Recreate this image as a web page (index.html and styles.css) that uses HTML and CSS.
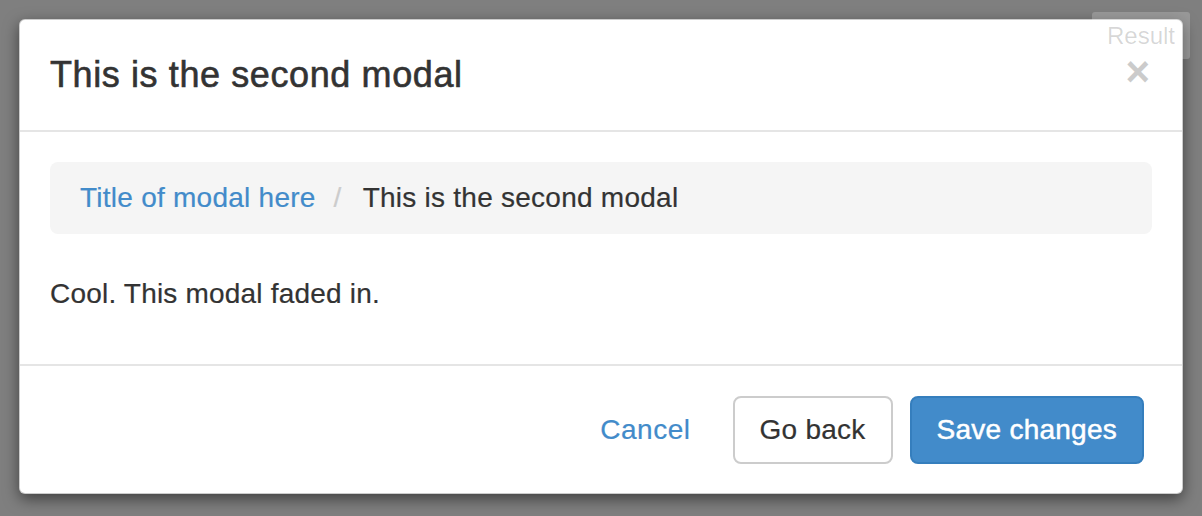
FILE: index.html
```html
<!DOCTYPE html>
<html lang="en">
<head>
<meta charset="utf-8">
<title>Second modal</title>
<link rel="stylesheet" href="styles.css">
</head>
<body>
  <div class="modal">
    <div class="modal-header">
      <h4 class="modal-title">This is the second modal</h4>
      <button class="close" type="button">&times;</button>
    </div>
    <div class="modal-body">
      <ol class="breadcrumb">
        <li><a href="#">Title of modal here</a></li>
        <li class="sep">/</li>
        <li class="active">This is the second modal</li>
      </ol>
      <p class="body-text">Cool. This modal faded in.</p>
    </div>
    <div class="modal-footer">
      <button class="btn btn-link" type="button">Cancel</button>
      <button class="btn btn-default" type="button">Go back</button>
      <button class="btn btn-primary" type="button">Save changes</button>
    </div>
  </div>
  <div class="result-label">Result</div>
</body>
</html>
```

FILE: styles.css
```css
html, body {
  margin: 0;
  padding: 0;
}

body {
  background: #7f7f7f;
  font-family: "Liberation Sans", Arial, sans-serif;
  color: #333;
  padding: 19px;
  height: 516px;
  box-sizing: border-box;
  overflow: hidden;
}

.modal {
  width: 1164px;
  box-sizing: border-box;
  background: #fff;
  border: 1px solid rgba(0, 0, 0, 0.2);
  border-radius: 6px;
  box-shadow: 0 5px 15px rgba(0, 0, 0, 0.5);
  overflow: hidden;
}

.modal-header {
  display: flex;
  justify-content: space-between;
  align-items: flex-start;
  padding: 30px;
  border-bottom: 2px solid #e5e5e5;
}

.modal-title {
  margin: 0;
  font-size: 36px;
  line-height: 50px;
  font-weight: 400;
  letter-spacing: 0.6px;
  color: #333;
  -webkit-text-stroke: 0.6px #333;
}

.close {
  margin: 0;
  padding: 0;
  border: 0;
  background: transparent;
  font-family: "Liberation Sans", Arial, sans-serif;
  font-size: 42px;
  font-weight: 700;
  line-height: 1;
  color: #000;
  opacity: 0.2;
  margin-top: 1px;
  margin-right: 2px;
  cursor: pointer;
}

.modal-body {
  padding: 30px;
}

.breadcrumb {
  display: flex;
  align-items: center;
  list-style: none;
  margin: 0 0 40px 0;
  padding: 16px 30px;
  background: #f5f5f5;
  border-radius: 8px;
  font-size: 28px;
  line-height: 40px;
  letter-spacing: 0.25px;
  -webkit-text-stroke: 0.2px currentColor;
}

.breadcrumb a {
  color: #428bca;
  text-decoration: none;
}

.breadcrumb .sep {
  color: #ccc;
  padding: 0 21px 0 18px;
}

.breadcrumb .active {
  color: #333;
}

.body-text {
  margin: 0 0 20px 0;
  font-size: 28px;
  line-height: 40px;
  letter-spacing: 0.2px;
  -webkit-text-stroke: 0.2px #333;
}

.modal-footer {
  display: flex;
  justify-content: flex-end;
  gap: 17px;
  padding: 30px 38px 29px 30px;
  border-top: 2px solid #e5e5e5;
}

.btn {
  font-family: "Liberation Sans", Arial, sans-serif;
  font-size: 28px;
  line-height: 40px;
  letter-spacing: 0.25px;
  padding: 12px 25px;
  border: 2px solid transparent;
  border-radius: 8px;
  background: transparent;
  cursor: pointer;
  margin: 0;
  -webkit-text-stroke: 0.2px currentColor;
}

.btn-link {
  color: #428bca;
  letter-spacing: 0.5px;
  padding: 12px 23px 12px 25px;
}

.btn-default {
  background: #fff;
  color: #333;
  border-color: #ccc;
}

.btn-primary {
  background: #428bca;
  border-color: #357ebd;
  color: #fff;
  padding: 12px 25px;
  -webkit-text-stroke: 0.5px #fff;
}

.result-label {
  position: absolute;
  top: 12px;
  left: 1092px;
  width: 98px;
  height: 47px;
  box-sizing: border-box;
  padding: 9px 0 0 15px;
  background: rgba(255, 255, 255, 0.2);
  border-radius: 3px;
  color: rgba(0, 0, 0, 0.16);
  font-size: 24px;
  line-height: 30px;
}
```
